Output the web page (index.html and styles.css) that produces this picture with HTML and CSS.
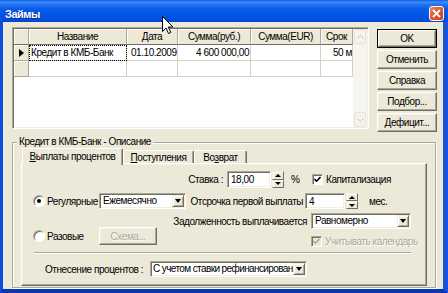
FILE: index.html
```html
<!DOCTYPE html>
<html>
<head>
<meta charset="utf-8">
<title>Займы</title>
<link rel="stylesheet" href="styles.css">
</head>
<body>
<div class="window">
  <div class="titlebar">
    <span class="title">Займы</span>
    <span class="close"><svg width="9" height="9" viewBox="0 0 9 9"><path d="M1 1 L8 8 M8 1 L1 8" stroke="#fff" stroke-width="1.8" fill="none"/></svg></span>
  </div>
  <div class="frame">
    <div class="client">
      <div class="top">
        <div class="grid">
          <table class="tbl">
            <colgroup>
              <col class="c0"><col class="c1"><col class="c2"><col class="c3"><col class="c4"><col class="c5">
            </colgroup>
            <thead>
              <tr><th></th><th>Название</th><th>Дата</th><th>Сумма(руб.)</th><th>Сумма(EUR)</th><th>Срок</th></tr>
            </thead>
            <tbody>
              <tr>
                <td class="ind"><span class="tri"></span></td>
                <td class="focus">Кредит в КМБ-Банк</td>
                <td class="date">01.10.2009</td>
                <td class="num">4 600 000,00</td>
                <td></td>
                <td class="term">50 мес</td>
              </tr>
              <tr>
                <td class="ind"></td><td></td><td></td><td></td><td></td><td></td>
              </tr>
            </tbody>
          </table>
          <div class="vscroll">
            <div class="sbtn"><svg width="7" height="4" viewBox="0 0 7 4"><path d="M0.5 3.5 L3.5 0.5 L6.5 3.5" stroke="#C6C3B6" fill="none"/></svg></div>
            <div class="track"></div>
            <div class="sbtn"><svg width="7" height="4" viewBox="0 0 7 4"><path d="M0.5 0.5 L3.5 3.5 L6.5 0.5" stroke="#C6C3B6" fill="none"/></svg></div>
          </div>
        </div>
        <div class="buttons">
          <div class="btn default"><span class="btn-in">OK</span></div>
          <div class="btn">Отменить</div>
          <div class="btn">Справка</div>
          <div class="btn">Подбор...</div>
          <div class="btn">Дефицит...</div>
        </div>
      </div>

      <div class="group">
        <span class="legend">Кредит в КМБ-Банк - Описание</span>
        <div class="tabs">
          <div class="tab active w1"><u>В</u>ыплаты процентов</div>
          <div class="tab w2"><u>П</u>оступления</div>
          <div class="tab w3">Во<u>з</u>врат</div>
        </div>
        <div class="panel">
          <div class="panel-main">
            <div class="col-left">
              <div class="lrow regular">
                <span class="radio-label"><span class="radio checked"></span>Регулярные</span>
                <div class="combo cmb-month"><span class="combo-text">Ежемесячно</span><span class="drop"><span class="dtri"></span></span></div>
              </div>
              <div class="lrow once">
                <span class="radio-label"><span class="radio"></span>Разовые</span>
                <div class="btn disabled scheme">Схема...</div>
              </div>
            </div>
            <div class="col-right">
              <div class="rrow r1">
                <span class="rlabel l1">Ставка :</span>
                <div class="edit e1">18,00</div>
                <div class="spin"><span class="sp"><span class="utri"></span></span><span class="sp"><span class="stri"></span></span></div>
                <span class="unit u1">%</span>
                <span class="check checked"><svg width="7" height="7" viewBox="0 0 7 7"><path d="M0.5 3 L2.5 5.2 L6.5 1" stroke="#000" stroke-width="1.6" fill="none"/></svg></span>
                <span class="ctext">Капитализация</span>
              </div>
              <div class="rrow r2">
                <span class="rlabel l2">Отсрочка первой выплаты</span>
                <div class="edit e2">4</div>
                <div class="spin"><span class="sp"><span class="utri"></span></span><span class="sp"><span class="stri"></span></span></div>
                <span class="unit u2">мес.</span>
              </div>
              <div class="rrow r3">
                <span class="rlabel l3">Задолженность выплачивается</span>
                <div class="combo cmb-even"><span class="combo-text">Равномерно</span><span class="drop"><span class="dtri"></span></span></div>
              </div>
              <div class="rrow r4">
                <span class="check disabled"><svg width="7" height="7" viewBox="0 0 7 7"><path d="M0.5 3 L2.5 5.2 L6.5 1" stroke="#ACA899" stroke-width="1.6" fill="none"/></svg></span>
                <span class="ctext dis">Учитывать календарь</span>
              </div>
            </div>
          </div>
          <div class="sep"></div>
          <div class="brow">
            <span class="blabel">Отнесение процентов :</span>
            <div class="combo cmb-ref"><span class="combo-text tight">С учетом ставки рефинансирования</span><span class="drop"><span class="dtri"></span></span></div>
          </div>
        </div>
      </div>
    </div>
  </div>
  <svg class="cursor" width="12" height="19" viewBox="0 0 12 19"><path d="M0.5 0.5 L0.5 15.5 L4 12 L6.5 17.5 L8.8 16.5 L6.3 11 L11 11 Z" fill="#fff" stroke="#000" stroke-width="1"/></svg>
</div>
</body>
</html>
```

FILE: styles.css
```css
* { box-sizing: border-box; }
html, body { margin: 0; padding: 0; }
body {
  width: 448px; height: 293px; overflow: hidden; background: #ECE9D8;
  font-family: "Liberation Sans", Arial, sans-serif;
  font-size: 10px; letter-spacing: -0.45px; color: #000;
}
.window { width: 448px; height: 293px; display: flex; flex-direction: column; position: relative; }

.titlebar {
  height: 22px; flex: none; display: flex; align-items: center; justify-content: space-between;
  padding: 5px 4px 0 5px;
  background: linear-gradient(to bottom, #0A5AE0 0px, #3D8DF8 2px, #2170F0 5px, #0A5CE8 9px, #0055E5 15px, #0052E0 19px, #0046D0 22px);
}
.title { color: #fff; font-weight: bold; font-size: 11px; letter-spacing: -0.5px; text-shadow: 1px 1px #0A2890; }
.close {
  width: 15px; height: 15px; border: 1px solid #fff; border-radius: 3px;
  background: linear-gradient(135deg, #EE8A66 0%, #DD5A32 45%, #C8411A 100%);
  display: flex; align-items: center; justify-content: center;
}

.frame {
  flex: 1; display: flex; background: #ECE9D8;
  border-left: 3px solid #0A50DC; border-right: 5px solid #1654DA; border-bottom: 4px solid #0A36B8;
}
.client { flex: 1; display: flex; flex-direction: column; padding: 5px 6px 0 9px; }

.top { display: flex; gap: 8px; }

/* grid */
.grid {
  width: 357px; height: 102px; display: flex; background: #fff;
  border: 1px solid; border-color: #ACA899 #fff #fff #ACA899;
  box-shadow: inset 1px 1px #716F64, inset -1px -1px #F1EFE2;
  padding: 1px;
}
.tbl { width: 339px; table-layout: fixed; border-collapse: separate; border-spacing: 0; align-self: flex-start; }
.c0 { width: 15px; } .c1 { width: 98px; } .c2 { width: 51px; } .c3 { width: 73px; } .c4 { width: 70px; } .c5 { width: 32px; }
.tbl th {
  height: 16px; padding: 0; font-weight: normal; background: #ECE9D8; text-align: center;
  border-right: 1px solid #ACA899; border-bottom: 1px solid #716F64;
  box-shadow: inset 1px 1px #fff; white-space: nowrap; overflow: hidden;
}
.tbl td {
  height: 16px; padding: 0 2px; border-right: 1px solid #D4D0C8; border-bottom: 1px solid #D4D0C8;
  white-space: nowrap; overflow: hidden;
}
.tbl td.ind { background: #ECE9D8; border-right: 1px solid #ACA899; border-bottom: 1px solid #ACA899; box-shadow: inset 1px 1px #fff; padding: 0 0 0 5px; }
.tri { display: block; width: 0; height: 0; border-left: 5px solid #000; border-top: 4px solid transparent; border-bottom: 4px solid transparent; }
.tbl td.focus { outline: 1px dotted #000; outline-offset: -1px; padding-left: 2px; }
.tbl td.date { padding-left: 4px; }
.tbl td.num { text-align: right; padding-right: 1px; }
.tbl td.term { padding-left: 12px; padding-right: 0; }

.vscroll { width: 14px; margin-left: auto; display: flex; flex-direction: column; background: #F5F4EE; padding: 0 1px; }
.sbtn {
  height: 15px; border: 1px solid #E6E4D9; border-radius: 2px; background: #F3F2EC;
  display: flex; align-items: center; justify-content: center;
}
.track { flex: 1; }

/* buttons */
.buttons { display: flex; flex-direction: column; gap: 2px; padding-top: 2px; width: 60px; }
.btn {
  height: 19px; width: 60px; display: flex; align-items: center; justify-content: center;
  background: #ECE9D8; border: 1px solid; border-color: #fff #716F64 #716F64 #fff;
  box-shadow: inset -1px -1px #ACA899, inset 1px 1px #F1EFE2; white-space: nowrap;
}
.btn.default { border-color: #000; box-shadow: none; padding: 0; }
.btn-in {
  flex: 1; align-self: stretch; display: flex; align-items: center; justify-content: center;
  border: 1px solid; border-color: #fff #716F64 #716F64 #fff; box-shadow: inset -1px -1px #ACA899;
}
.btn.disabled { color: #ACA899; text-shadow: 1px 1px #fff; }

/* group */
.group {
  position: relative; margin-top: 10px; width: 424px; height: 146px;
  border: 1px solid #ACA899; box-shadow: inset 1px 1px #fff, 1px 1px #fff;
  padding: 5px 8px 1px 8px; display: flex; flex-direction: column;
}
.legend { position: absolute; left: 4px; top: -7px; padding: 0 2px; background: #ECE9D8; line-height: 12px; }

.tabs { display: flex; height: 15px; align-items: flex-end; padding-left: 1px; position: relative; z-index: 1; }
.tab {
  height: 13px; display: flex; align-items: center; justify-content: center; background: #ECE9D8;
  border-top: 1px solid #fff; border-left: 1px solid #fff; border-right: 1px solid #716F64;
  border-radius: 2px 2px 0 0; box-shadow: inset -1px 0 #ACA899; white-space: nowrap;
}
.tab.active { height: 17px; margin-bottom: -2px; padding-bottom: 2px; }
.w1 { width: 101px; } .w2 { width: 71px; } .w3 { width: 53px; }

.panel {
  flex: 1; border: 1px solid; border-color: #fff #716F64 #716F64 #fff;
  box-shadow: inset -1px -1px #ACA899, inset 1px 1px #F1EFE2;
  padding: 7px 14px 0 11px; display: flex; flex-direction: column;
}
.panel-main { display: flex; }
.col-left { width: 153px; display: flex; flex-direction: column; }
.col-right { flex: 1; display: flex; flex-direction: column; }

.lrow { display: flex; align-items: center; }
.lrow.regular { margin-top: 22px; height: 16px; }
.lrow.once { margin-top: 18px; height: 18px; }
.radio-label { width: 66px; display: flex; align-items: center; gap: 2px; white-space: nowrap; }
.radio {
  width: 12px; height: 12px; border-radius: 50%; background: #fff; flex: none;
  border: 1px solid; border-color: #ACA899 #fff #fff #ACA899; box-shadow: inset 1px 1px #716F64;
  display: flex; align-items: center; justify-content: center;
}
.radio.checked::after { content: ""; width: 4px; height: 4px; border-radius: 50%; background: #000; }
.scheme { width: 58px; height: 18px; }

.combo {
  height: 16px; display: flex; background: #fff;
  border: 1px solid; border-color: #ACA899 #fff #fff #ACA899;
  box-shadow: inset 1px 1px #716F64, inset -1px -1px #F1EFE2; padding: 1px;
}
.combo-text { flex: 1; padding-left: 2px; white-space: nowrap; overflow: hidden; line-height: 12px; }
.combo-text.tight { letter-spacing: -0.6px; padding-left: 1px; }
.drop {
  width: 12px; flex: none; background: #ECE9D8; border: 1px solid; border-color: #F1EFE2 #716F64 #716F64 #F1EFE2;
  box-shadow: inset 1px 1px #fff, inset -1px -1px #ACA899; display: flex; align-items: center; justify-content: center;
}
.dtri { width: 0; height: 0; border-top: 4px solid #000; border-left: 3.5px solid transparent; border-right: 3.5px solid transparent; }
.stri { width: 0; height: 0; border-top: 3px solid #000; border-left: 3px solid transparent; border-right: 3px solid transparent; }
.utri { width: 0; height: 0; border-bottom: 3px solid #000; border-left: 3px solid transparent; border-right: 3px solid transparent; }
.cmb-month { width: 87px; }
.cmb-even { width: 100px; }
.cmb-ref { width: 157px; }

.rrow { display: flex; align-items: center; }
.rrow.r1 { height: 17px; }
.rrow.r2 { height: 16px; margin-top: 5px; }
.rrow.r3 { height: 16px; margin-top: 4px; }
.rrow.r4 { height: 13px; margin-top: 6px; padding-left: 125px; }
.rlabel { display: flex; justify-content: flex-end; white-space: nowrap; flex: none; }
.l1 { width: 37px; margin-right: 4px; }
.l2 { width: 117px; margin-right: 2px; }
.l3 { width: 121px; margin-right: 4px; }

.edit {
  align-self: stretch; background: #fff; padding-left: 3px; display: flex; align-items: center;
  border: 1px solid; border-color: #ACA899 #fff #fff #ACA899; box-shadow: inset 1px 1px #716F64, inset -1px -1px #F1EFE2;
}
.e1 { width: 44px; }
.e2 { width: 40px; }
.spin { width: 12px; align-self: stretch; margin-left: 1px; display: flex; flex-direction: column; }
.sp {
  flex: 1; background: #ECE9D8; border: 1px solid; border-color: #F1EFE2 #716F64 #716F64 #F1EFE2;
  box-shadow: inset 1px 1px #fff;
  display: flex; align-items: center; justify-content: center;
}
.unit.u1 { width: 28px; padding-left: 7px; }
.unit.u2 { margin-left: 11px; }

.check {
  width: 11px; height: 11px; flex: none; background: #fff; display: flex; align-items: center; justify-content: center;
  border: 1px solid; border-color: #ACA899 #fff #fff #ACA899; box-shadow: inset 1px 1px #716F64;
}
.check.disabled { background: #ECE9D8; }
.ctext { margin-left: 3px; white-space: nowrap; }
.ctext.dis { color: #ACA899; text-shadow: 1px 1px #fff; }

.sep { margin: 4px 0 0 1px; width: 377px; height: 2px; border-top: 1px solid #ACA899; border-bottom: 1px solid #fff; }
.brow { display: flex; align-items: center; margin-top: 7px; height: 16px; }
.blabel { margin-left: 12px; width: 105px; white-space: nowrap; }

.cursor { position: absolute; left: 162px; top: 16px; }
```
